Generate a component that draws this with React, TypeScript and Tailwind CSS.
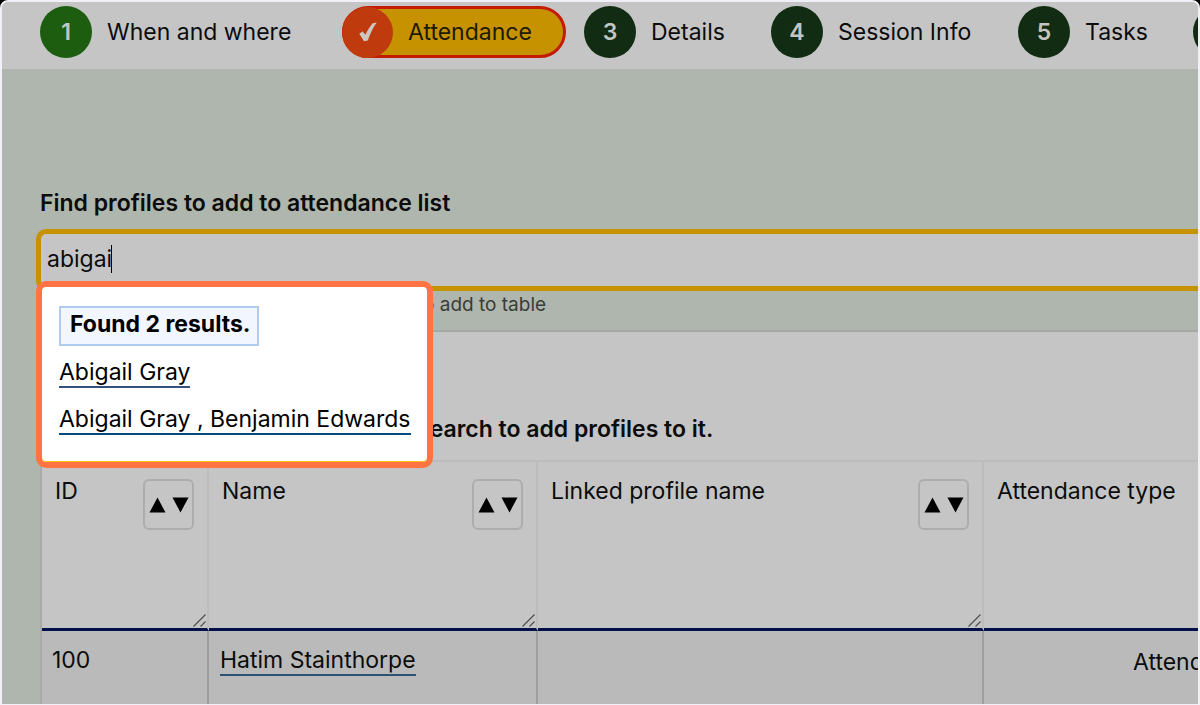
import { useState } from "react";

const steps = [
  { mark: "1", label: "When and where", state: "done" },
  { mark: "✓", label: "Attendance", state: "current" },
  { mark: "3", label: "Details", state: "todo" },
  { mark: "4", label: "Session Info", state: "todo" },
  { mark: "5", label: "Tasks", state: "todo" },
  { mark: "", label: "", state: "todo" },
];

function CheckMark() {
  return (
    <svg viewBox="0 0 18 20" className="h-5 w-[18px]" aria-hidden="true">
      <path d="M0.3 11.8 3.6 9.4 6.4 12.8C8.6 8.2 11 4.2 13.6 1.2L17.8 0.6C13.8 6 11.2 11.6 8.8 18.4L5 19.2Z" fill="#cdc5c2" />
    </svg>
  );
}

function Step({ mark, label, state }: { mark: string; label: string; state: string }) {
  if (state === "current") {
    return (
      <a
        href="#attendance"
        aria-current="step"
        className="flex h-[52px] w-56 items-center gap-[15px] rounded-full border-[3px] border-[#c41c04] bg-[#c69200]"
      >
        <span className="-ml-[3px] flex size-[51px] shrink-0 items-center justify-center rounded-full bg-[#bf3b0e]">
          <CheckMark />
        </span>
        <span className="text-[#1c1a04]">{label}</span>
      </a>
    );
  }
  return (
    <a href="#step" aria-label={label || "Next step"} className="flex items-center gap-[15px] whitespace-nowrap">
      <span
        className={
          state === "done"
            ? "flex size-[52px] shrink-0 items-center justify-center rounded-full bg-[#1d5d10] font-semibold text-[#c4c4c4]"
            : "flex size-[52px] shrink-0 items-center justify-center rounded-full bg-[#112c12] font-semibold text-[#c4c4c4]"
        }
      >
        {mark}
      </span>
      <span>{label}</span>
    </a>
  );
}

function SortButton({ column }: { column: string }) {
  return (
    <button
      type="button"
      aria-label={`Sort by ${column}`}
      className="flex size-[51px] shrink-0 items-center justify-center rounded-md border-2 border-[#adadad]"
    >
      <svg viewBox="0 0 40 16" className="h-4 w-10" aria-hidden="true">
        <path d="M0.5 15.5 8.5 0.5 16.5 15.5ZM23.5 0.5H39.5L31.5 15.5Z" fill="#000" />
      </svg>
    </button>
  );
}

function HeaderCell({ label, sortable = true }: { label: string; sortable?: boolean }) {
  return (
    <th className="border-r-2 border-b-3 border-r-[#bcbcbc] border-b-[#02104a] p-0 text-left align-top font-normal">
      <div className="flex h-[166px] flex-col justify-between">
        <div className="flex items-start justify-between pt-[17px] pr-[13px] pl-[13px]">
          <span className="whitespace-nowrap leading-6">{label}</span>
          {sortable && <SortButton column={label} />}
        </div>
        {sortable && (
          <svg viewBox="0 0 14 14" className="size-3.5 self-end" aria-hidden="true">
            <path d="M0.5 12.5 12.5 0.5M7.5 12.5 12.5 7.5" stroke="#4d4d4d" strokeWidth="1.2" fill="none" />
          </svg>
        )}
      </div>
    </th>
  );
}

export default function App() {
  const [query, setQuery] = useState("abigai");
  return (
    <div className="min-h-screen bg-black font-['Inter','Liberation_Sans',sans-serif] text-[23px] leading-7 text-[#0c0c0c]">
      <div className="flex min-h-screen flex-col overflow-hidden rounded-t-lg border-2 border-b border-[#f1f0f8] bg-[#afb6ad]">
        <nav aria-label="Progress" className="overflow-hidden bg-[#c5c5c5] pt-1 pb-[11px] pl-[38px]">
          <div className="grid grid-cols-[302px_242px_187px_247px_175px_52px] items-center">
            {steps.map((step, index) => (
              <Step key={index} {...step} />
            ))}
          </div>
        </nav>

        <main className="flex grow flex-col pt-[120px]">
          <div className="relative pl-[34px]">
            <label htmlFor="profile-search" className="block pl-1 font-semibold">
              Find profiles to add to attendance list
            </label>
            <div className="relative mt-3">
              <input
                id="profile-search"
                value={query}
                onChange={(event) => setQuery(event.target.value)}
                className="block h-[62px] w-full rounded-l-[10px] border-y-[5px] border-l-[5px] border-[#c69200] bg-[#c5c5c5] pb-0.5 pl-[6px] caret-transparent outline-none"
              />
              <span className="absolute top-4 left-[75px] h-7 w-px bg-black" />
            </div>
            <p className="h-[39px] pl-[381px] text-[19px] leading-7 text-[#393c38]">to add to table</p>

            <div className="absolute top-[92px] left-[34px] flex h-[187px] w-[397px] flex-col items-start rounded-[10px] border-[6px] border-[#ff7442] bg-white pt-[19px] pl-[17px] text-black shadow-[inset_0_-1px_0_#ffc21a]">
              <strong className="flex h-10 w-50 items-center border-2 border-[#b3caef] bg-[#f1f6ff] pb-1 pl-[9px] font-bold whitespace-nowrap">
                Found 2 results.
              </strong>
              <a href="#abigail-gray" className="mt-3 border-b-2 border-[#35507c] leading-7">
                Abigail Gray
              </a>
              <a href="#abigail-benjamin" className="mt-[17px] border-b-2 border-[#064b7c] leading-7 whitespace-nowrap">
                Abigail Gray , Benjamin Edwards
              </a>
            </div>
          </div>

          <section className="ml-[38px] grow border-t-2 border-l-2 border-t-[#a5a8a4] border-l-[#aaaaaa] bg-[#c5c5c5]">
            <h2 className="pt-[83px] pb-[17px] pl-[375px] font-semibold">search to add profiles to it.</h2>
            <div className="overflow-hidden">
              <table className="w-full min-w-[1170px] table-fixed border-separate border-spacing-0 border-t-2 border-[#bcbcbc]">
                <colgroup>
                  <col className="w-[167px]" />
                  <col className="w-[329px]" />
                  <col className="w-[446px]" />
                  <col />
                </colgroup>
                <thead>
                  <tr>
                    <HeaderCell label="ID" />
                    <HeaderCell label="Name" />
                    <HeaderCell label="Linked profile name" />
                    <HeaderCell label="Attendance type" sortable={false} />
                  </tr>
                </thead>
                <tbody className="bg-[#bababa]">
                  <tr className="h-[73px] align-top">
                    <td className="border-r-2 border-[#9e9e9e] pt-[15px] pl-[10px]">100</td>
                    <td className="border-r-2 border-[#9e9e9e] pt-[15px] pl-[11px]">
                      <a href="#hatim" className="inline-block border-b-2 border-[#2d5272] leading-7">
                        Hatim Stainthorpe
                      </a>
                    </td>
                    <td className="border-r-2 border-[#9e9e9e]" />
                    <td className="overflow-hidden pt-[17px] pl-[149px] whitespace-nowrap">Attended</td>
                  </tr>
                </tbody>
              </table>
            </div>
          </section>
        </main>
      </div>
    </div>
  );
}
